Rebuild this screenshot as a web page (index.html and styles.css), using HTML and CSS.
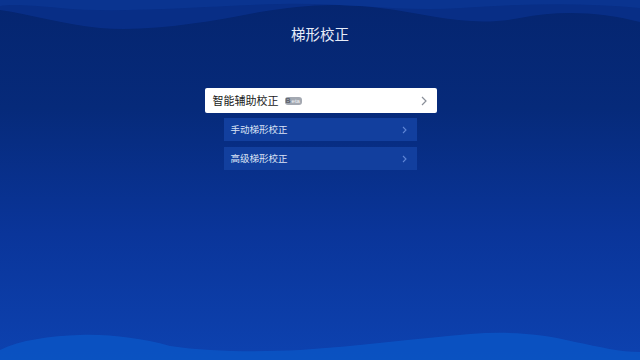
FILE: index.html
```html
<!DOCTYPE html>
<html lang="zh">
<head>
<meta charset="utf-8">
<link rel="stylesheet" href="styles.css">
</head>
<body>
<div class="screen">
  <svg class="bg" width="640" height="360" viewBox="0 0 640 360" preserveAspectRatio="none">
    <defs>
      <linearGradient id="g" x1="0" y1="0" x2="0" y2="1">
        <stop offset="0" stop-color="#05256f"/>
        <stop offset="0.3" stop-color="#062a7a"/>
        <stop offset="0.65" stop-color="#0a359a"/>
        <stop offset="1" stop-color="#0d42b0"/>
      </linearGradient>
    </defs>
    <rect width="640" height="360" fill="url(#g)"/>
    <path d="M0 0 H640 V22 C600 12 560 10 520 18 C470 28 430 14 380 8 C330 2 300 6 260 12 C210 22 150 32 100 28 C60 24 30 14 0 10 Z" fill="#0a3290" opacity="0.7"/>
    <path d="M0 0 H640 V8 C580 2 520 4 460 8 C400 12 340 2 280 4 C200 6 120 14 60 8 C30 5 10 4 0 6 Z" fill="#0c3898" opacity="0.6"/>
    <path d="M0 360 V350 C20 340 50 336 80 335 C110 334 140 338 170 346 C210 352 260 352 300 350 C360 346 420 338 470 334 C510 331 545 334 575 342 C600 347 620 352 640 352 V360 Z" fill="#0a55c4" opacity="0.85"/>
  </svg>
  <h1 class="title">梯形校正</h1>
  <div class="menu">
    <div class="item main">
      <span class="label">智能辅助校正</span>
      <span class="beta"><b>B</b>eta</span>
      <svg class="chev" width="6" height="10" viewBox="0 0 6 10"><path d="M1 1 L5 5 L1 9" fill="none" stroke="#8a8f99" stroke-width="1.2"/></svg>
    </div>
    <div class="item sub">
      <span class="label">手动梯形校正</span>
      <svg class="chev" width="5" height="8" viewBox="0 0 5 8"><path d="M1 1 L4 4 L1 7" fill="none" stroke="#5f86d6" stroke-width="1.1"/></svg>
    </div>
    <div class="item sub">
      <span class="label">高级梯形校正</span>
      <svg class="chev" width="5" height="8" viewBox="0 0 5 8"><path d="M1 1 L4 4 L1 7" fill="none" stroke="#5f86d6" stroke-width="1.1"/></svg>
    </div>
  </div>
</div>
</body>
</html>
```
FILE: styles.css
```css
html, body {
  margin: 0;
  padding: 0;
}
body {
  width: 640px;
  height: 360px;
  overflow: hidden;
  font-family: "Noto Sans CJK SC", "Noto Sans", sans-serif;
}
.screen {
  position: relative;
  width: 640px;
  height: 360px;
  display: flex;
  flex-direction: column;
  align-items: center;
}
.bg {
  position: absolute;
  left: 0;
  top: 0;
  z-index: 0;
}
.title {
  position: relative;
  z-index: 1;
  margin: 24px 0 0;
  font-size: 14.5px;
  font-weight: 400;
  color: #e6ecf8;
  line-height: 20px;
  height: 20px;
}
.menu {
  position: relative;
  z-index: 1;
  margin-top: 44px;
  display: flex;
  flex-direction: column;
  align-items: center;
  gap: 6px;
}
.item {
  display: flex;
  align-items: center;
  box-sizing: border-box;
}
.main {
  width: 232px;
  height: 25px;
  margin-left: 1px;
  background: #ffffff;
  border-radius: 2px;
  padding: 0 10px 0 8px;
  margin-bottom: -1px;
}
.main .label {
  font-size: 11px;
  color: #1a1a1a;
  line-height: 25px;
}
.beta {
  margin-left: 6px;
  width: 17px;
  height: 8px;
  box-sizing: border-box;
  padding: 0 1px;
  border-radius: 3px;
  background: #a3a8b1;
  color: #f2f4f7;
  font-family: "Liberation Sans", sans-serif;
  font-size: 6px;
  line-height: 8px;
  display: flex;
  align-items: center;
}
.beta b {
  font-weight: 700;
  font-size: 7px;
  color: #5d636d;
  margin-right: 1px;
}
.main .chev {
  margin-left: auto;
}
.sub {
  width: 193px;
  height: 23px;
  background: #123f9e;
  padding: 0 10px 0 7px;
}
.sub .label {
  font-size: 9.5px;
  color: #dbe3f5;
  line-height: 23px;
}
.sub .chev {
  margin-left: auto;
}
```
